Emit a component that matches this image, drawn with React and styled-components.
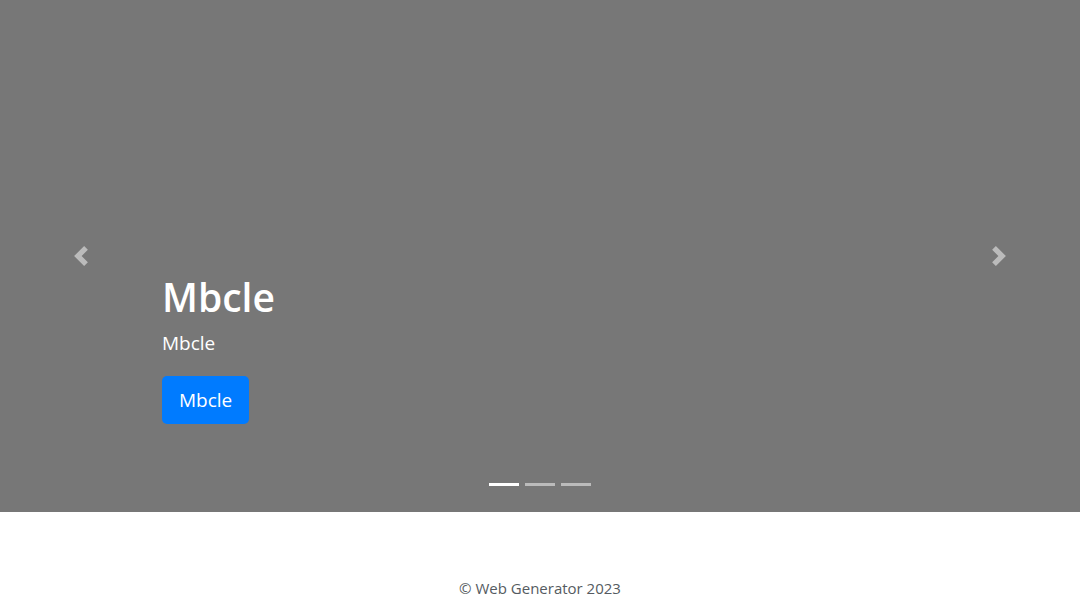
import styled, { createGlobalStyle } from "styled-components"

const GlobalStyle = createGlobalStyle`
  body {
    margin: 0;
    font-family: "Open Sans", "Noto Sans", sans-serif;
    color: #212529;
    background: #fff;
  }
  * { box-sizing: border-box; }
`

const Carousel = styled.section`
  position: relative;
  height: 512px;
  background: #777777;
  overflow: hidden;
`

const Slide = styled.div`
  height: 100%;
  display: flex;
  flex-direction: column;
  align-items: flex-start;
  padding: 274px 162px 0;
  color: #fff;
`

const Title = styled.h1`
  margin: 0 0 8px;
  font-size: 39px;
  font-weight: 600;
  line-height: 1.2;
`

const Lead = styled.p`
  margin: 0 0 19px;
  font-size: 19px;
  line-height: 1.5;
`

const Button = styled.a`
  display: inline-block;
  padding: 9px 17px;
  font-size: 19px;
  line-height: 30px;
  border-radius: 5px;
  background: #007bff;
  color: #fff;
  text-decoration: none;
`

const Control = styled.a`
  position: absolute;
  top: 0;
  bottom: 0;
  ${(p) => (p.$side === "prev" ? "left: 0;" : "right: 0;")}
  width: 162px;
  display: flex;
  align-items: center;
  justify-content: center;
  opacity: 0.5;
  color: #fff;
`

const Indicators = styled.ol`
  position: absolute;
  left: 0;
  right: 0;
  bottom: 10px;
  margin: 0 0 16px;
  padding: 0;
  list-style: none;
  display: flex;
  justify-content: center;
`

const Indicator = styled.li`
  width: 30px;
  height: 3px;
  margin: 0 3px;
  background: #fff;
  opacity: ${(p) => (p.$active ? 1 : 0.5)};
`

const Footer = styled.footer`
  padding: 64px 0 0;
  text-align: center;
  font-size: 15px;
  line-height: 24px;
  color: #555b61;
`

function Chevron({ dir }) {
  const d = dir === "prev" ? "M5.25 0l-4 4 4 4 1.5-1.5L4.25 4l2.5-2.5L5.25 0z" : "M2.75 0l-1.5 1.5L3.75 4l-2.5 2.5L2.75 8l4-4-4-4z"
  return (
    <svg width="20" height="20" viewBox="0 0 8 8" fill="currentColor">
      <path d={d} />
    </svg>
  )
}

export default function App() {
  return (
    <>
      <GlobalStyle />
      <Carousel>
        <Slide>
          <Title>Mbcle</Title>
          <Lead>Mbcle</Lead>
          <Button href="#">Mbcle</Button>
        </Slide>
        <Control $side="prev" href="#">
          <Chevron dir="prev" />
        </Control>
        <Control $side="next" href="#">
          <Chevron dir="next" />
        </Control>
        <Indicators>
          <Indicator $active />
          <Indicator />
          <Indicator />
        </Indicators>
      </Carousel>
      <Footer>© Web Generator 2023</Footer>
    </>
  )
}
